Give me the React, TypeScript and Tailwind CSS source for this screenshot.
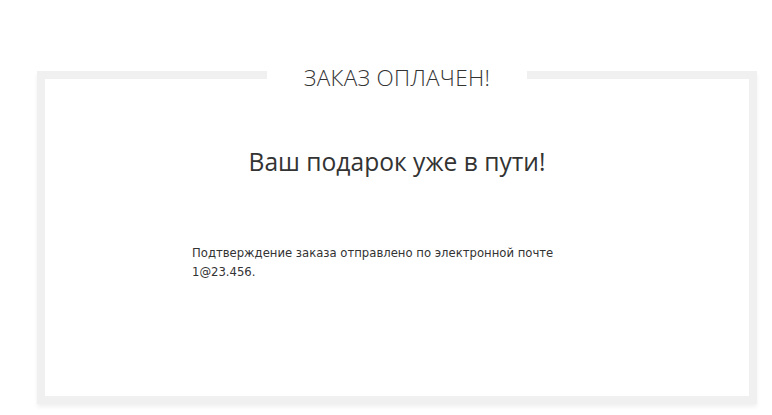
import React from "react";

export default function App() {
    return (
        <div className="min-h-[415px] w-[772px] bg-white pt-[71px] pl-[37px]">
            <div className="relative h-[333px] w-[720px] border-8 border-[#f0f0f0] shadow-[0_3px_4px_rgba(0,0,0,0.06)]">
                <div className="absolute -top-[19px] left-[222px] w-[260px] bg-white text-center font-['Open_Sans',sans-serif] text-[22.5px] font-light leading-[36px] tracking-[0.3px] text-[#333]">
                    ЗАКАЗ ОПЛАЧЕН!
                </div>
                <h1 className="pt-[63px] text-center font-['Open_Sans',sans-serif] text-[24.6px] leading-[40px] text-[#333]">
                    Ваш подарок уже в пути!
                </h1>
                <p className="ml-[147px] mt-[62px] w-[380px] font-['DejaVu_Sans',sans-serif] text-[11.65px] leading-[19px] text-[#333]">
                    Подтверждение заказа отправлено по электронной почте 1@23.456.
                </p>
            </div>
        </div>
    );
}
